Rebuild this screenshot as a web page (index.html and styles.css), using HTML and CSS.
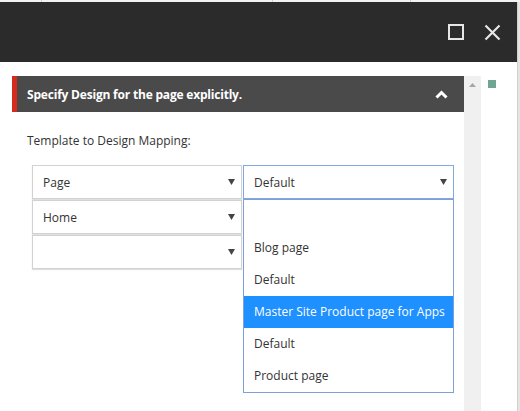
FILE: index.html
```html
<!DOCTYPE html>
<html>
<head>
<meta charset="utf-8">
<link rel="stylesheet" href="styles.css">
</head>
<body>
<div class="topstrip">
  <span class="tick t1"></span><span class="tick t2"></span><span class="tick t3"></span>
</div>
<div class="titlebar">
  <svg class="ticon" width="16" height="16" viewBox="0 0 16 16"><rect x="1" y="1" width="14" height="14" fill="none" stroke="#e6e6e6" stroke-width="2"/></svg>
  <svg class="ticon" width="17" height="17" viewBox="0 0 17 17"><path d="M1.5 1.5 L15.5 15.5 M15.5 1.5 L1.5 15.5" stroke="#e6e6e6" stroke-width="2.2" fill="none"/></svg>
</div>
<div class="body">
  <div class="main">
    <div class="panel">
      <div class="phead">
        <span class="ptitle">Specify Design for the page explicitly.</span>
        <svg class="chev" width="13" height="9" viewBox="0 0 13 9"><path d="M1.5 7.5 L6.5 2.5 L11.5 7.5" stroke="#fff" stroke-width="3" fill="none"/></svg>
      </div>
      <div class="pbody">
        <div class="label">Template to Design Mapping:</div>
        <div class="grid">
          <div class="sel"><span>Page</span><svg class="arr" width="7" height="6" viewBox="0 0 7 6"><path d="M0 0 H7 L3.5 6 Z" fill="#444"/></svg></div>
          <div class="sel focus"><span>Default</span><svg class="arr" width="7" height="6" viewBox="0 0 7 6"><path d="M0 0 H7 L3.5 6 Z" fill="#444"/></svg>
            <ul class="list">
              <li></li>
              <li>Blog page</li>
              <li>Default</li>
              <li class="hl">Master Site Product page for Apps</li>
              <li>Default</li>
              <li>Product page</li>
            </ul>
          </div>
          <div class="sel"><span>Home</span><svg class="arr" width="7" height="6" viewBox="0 0 7 6"><path d="M0 0 H7 L3.5 6 Z" fill="#444"/></svg></div>
          <div></div>
          <div class="sel"><span></span><svg class="arr" width="7" height="6" viewBox="0 0 7 6"><path d="M0 0 H7 L3.5 6 Z" fill="#444"/></svg></div>
          <div></div>
        </div>
      </div>
    </div>
  </div>
  <div class="scroll">
    <svg width="7" height="4" viewBox="0 0 7 4"><path d="M0 4 H7 L3.5 0 Z" fill="#a6a6a6"/></svg>
  </div>
  <div class="side"><span class="dot"></span></div>
  <div class="edge"></div>
</div>
</body>
</html>
```
FILE: styles.css
```css
* { box-sizing: border-box; }
html, body { margin: 0; padding: 0; }
body {
  width: 520px;
  height: 411px;
  overflow: hidden;
  background: #fff;
  font-family: "Open Sans", "Noto Sans", sans-serif;
  font-size: 12px;
  color: #333;
  position: relative;
}
.topstrip {
  height: 2px;
  background: #f2f2f2;
  position: relative;
}
.tick { position: absolute; top: 0; width: 1px; height: 2px; background: #cfcfcf; }
.t1 { left: 41px; }
.t2 { left: 272px; }
.t3 { left: 410px; }
.titlebar {
  height: 60px;
  width: 517px;
  background: #2b2b2b;
  display: flex;
  justify-content: flex-end;
  align-items: center;
  gap: 20px;
  padding-right: 16px;
}
.body {
  display: flex;
  height: 349px;
  padding-top: 14px;
}
.main {
  width: 464px;
  padding-left: 12px;
}
.panel { width: 452px; }
.phead {
  height: 36px;
  background: #4a4a4a;
  border-left: 5px solid #d62a1f;
  display: flex;
  align-items: center;
  justify-content: space-between;
  padding-left: 10px;
  padding-right: 16px;
}
.ptitle {
  color: #fff;
  font-weight: 700;
  font-size: 12px;
  letter-spacing: -0.2px;
}
.chev { display: block; }
.pbody { padding: 20px 0 0 15px; }
.label { font-size: 12px; line-height: 17px; }
.grid {
  margin: 16px 0 0 5px;
  display: grid;
  grid-template-columns: 211px 211px;
  row-gap: 1px;
}
.sel {
  position: relative;
  height: 34px;
  border: 1px solid #d2d2d2;
  box-shadow: 0 1px 1px rgba(0,0,0,0.12);
  display: flex;
  align-items: center;
  justify-content: space-between;
  padding: 0 6px 0 10px;
  background: #fff;
}
.sel:nth-child(odd) { width: 210px; }
.sel.focus { border-color: #80a9e2; box-shadow: none; }
.arr { display: block; }
.list {
  position: absolute;
  left: -1px;
  top: 33px;
  width: 211px;
  margin: 0;
  padding: 0;
  list-style: none;
  border: 1px solid #7f9fd6;
  background: #fff;
  z-index: 2;
}
.list li {
  height: 32px;
  line-height: 32px;
  padding-left: 10px;
  white-space: nowrap;
}
.list li.hl { background: #1e90ff; color: #fff; }
.scroll {
  width: 17px;
  background: #f0f0f0;
  display: flex;
  justify-content: center;
  padding-top: 7px;
  align-items: flex-start;
}
.side { width: 36px; padding: 4px 0 0 7px; }
.dot { display: block; width: 8px; height: 8px; background: #6fa595; }
.edge {
  width: 3px;
  margin-top: -76px;
  height: 411px;
  background: #e4e4e4;
  border-left: 1px solid #d0d0d0;
}
```
